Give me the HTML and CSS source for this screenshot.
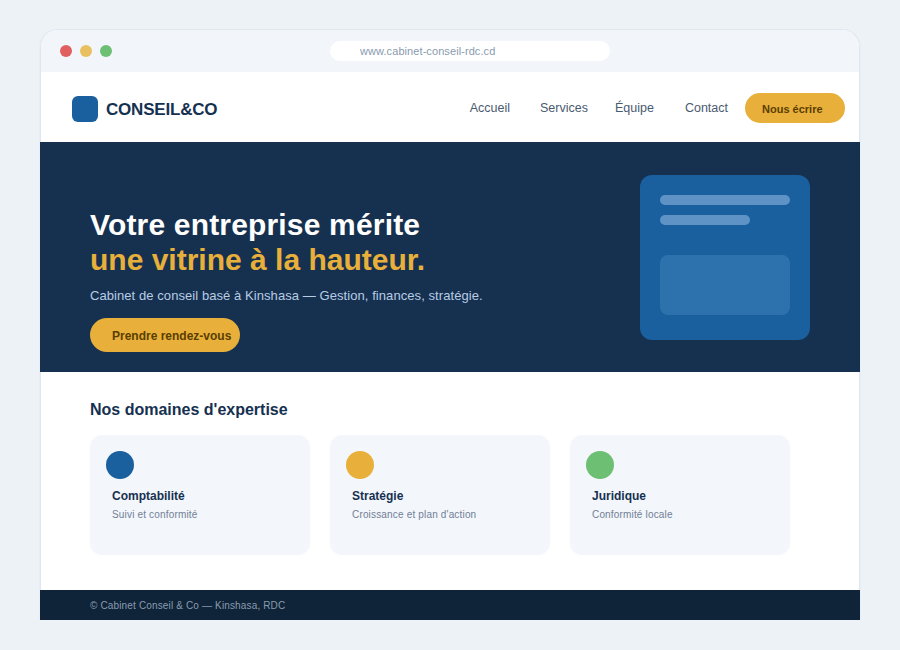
FILE: index.html
```html
<!DOCTYPE html>
<html lang="fr">
<head>
  <meta charset="UTF-8" />
  <title>Conseil&amp;Co</title>
  <link rel="stylesheet" href="styles.css">
</head>
<body>
  <div class="window">
    <!-- Browser chrome -->
    <div class="chrome">
      <div class="dots">
        <span class="dot dot-red"></span>
        <span class="dot dot-yellow"></span>
        <span class="dot dot-green"></span>
      </div>
      <div class="url">www.cabinet-conseil-rdc.cd</div>
    </div>

    <!-- Site nav -->
    <nav class="nav">
      <div class="brand">
        <span class="brand-mark"></span>
        <span class="brand-name">CONSEIL&amp;CO</span>
      </div>
      <div class="nav-links">
        <a class="nav-link link-accueil">Accueil</a>
        <a class="nav-link link-services">Services</a>
        <a class="nav-link link-equipe">Équipe</a>
        <a class="nav-link link-contact">Contact</a>
        <a class="nav-cta">Nous écrire</a>
      </div>
    </nav>

    <!-- Hero -->
    <section class="hero">
      <div class="hero-text">
        <h1><span class="lead">Votre entreprise mérite</span><br><span class="accent">une vitrine à la hauteur.</span></h1>
        <p>Cabinet de conseil basé à Kinshasa — Gestion, finances, stratégie.</p>
        <a class="hero-cta">Prendre rendez-vous</a>
      </div>
      <div class="hero-card">
        <div class="bar bar-long"></div>
        <div class="bar bar-short"></div>
        <div class="hero-block"></div>
      </div>
    </section>

    <!-- Services -->
    <section class="services">
      <h2>Nos domaines d'expertise</h2>
      <div class="cards">
        <div class="card">
          <span class="card-icon icon-blue"></span>
          <div class="card-body">
            <h3>Comptabilité</h3>
            <p>Suivi et conformité</p>
          </div>
        </div>
        <div class="card">
          <span class="card-icon icon-gold"></span>
          <div class="card-body">
            <h3>Stratégie</h3>
            <p>Croissance et plan d'action</p>
          </div>
        </div>
        <div class="card">
          <span class="card-icon icon-green"></span>
          <div class="card-body">
            <h3>Juridique</h3>
            <p>Conformité locale</p>
          </div>
        </div>
      </div>
    </section>

    <footer class="footer">© Cabinet Conseil &amp; Co — Kinshasa, RDC</footer>
  </div>
</body>
</html>
```

FILE: styles.css
```css
/* ===== Page ===== */
* {
  box-sizing: border-box;
}

body {
  margin: 0;
  height: 650px;
  padding: 29px 40px 30px;
  background: #edf2f7;
  font-family: "Liberation Sans", Arial, sans-serif;
  text-rendering: optimizeSpeed;
  overflow: hidden;
}

.window {
  height: 591px;
  border: 1px solid #dfe7f1;
  border-bottom: none;
  border-radius: 18px 18px 0 0;
  background: #ffffff;
  box-shadow: -1px 0 0 #e8eef5, 1px 0 0 #e8eef5;
  display: flex;
  flex-direction: column;
}

/* ===== Browser chrome ===== */
.chrome {
  height: 42px;
  background: #f2f6fb;
  border-radius: 17px 17px 0 0;
  display: flex;
  align-items: center;
  padding: 0 19px;
}

.dots {
  display: flex;
  gap: 8px;
  width: 270px;
}

.dot {
  width: 12px;
  height: 12px;
  border-radius: 50%;
}

.dot-red { background: #e06060; }
.dot-yellow { background: #e8c060; }
.dot-green { background: #6dbf73; }

.url {
  width: 280px;
  height: 20px;
  padding-left: 30px;
  background: #ffffff;
  border-radius: 10px;
  font-size: 11px;
  line-height: 20px;
  letter-spacing: 0.08px;
  color: #8a9bb0;
}

/* ===== Nav ===== */
.nav {
  height: 70px;
  flex: none;
  display: flex;
  align-items: center;
  justify-content: space-between;
  padding: 2px 14px 0 31px;
}

.brand {
  display: flex;
  align-items: center;
  gap: 8px;
  margin-top: 2px;
}

.brand-mark {
  width: 26px;
  height: 26px;
  border-radius: 6px;
  background: #1a5f9e;
}

.brand-name {
  padding-top: 2px;
  font-size: 17px;
  font-weight: 700;
  letter-spacing: -0.2px;
  color: #163150;
}

.nav-links {
  display: flex;
  align-items: center;
}

.nav-link {
  font-size: 12.5px;
  color: #4a5a70;
  margin-top: -1px;
}

.link-accueil { margin-right: 30px; }
.link-services { margin-right: 27px; }
.link-equipe { margin-right: 31px; }
.link-contact { margin-right: 17px; }

.nav-cta {
  width: 100px;
  height: 30px;
  padding-left: 17px;
  border-radius: 15px;
  background: #e8b03a;
  color: #5a3e00;
  font-size: 11px;
  font-weight: 700;
  line-height: 32px;
}

/* ===== Hero ===== */
.hero {
  height: 230px;
  flex: none;
  margin: 0 -1px;
  background: #163150;
  display: flex;
  justify-content: space-between;
  padding: 33px 50px 0;
}

.hero-text {
  padding-top: 32px;
}

.hero h1 {
  margin: 0;
  font-size: 30px;
  line-height: 35px;
  font-weight: 700;
  color: #ffffff;
}

.lead {
  letter-spacing: 0.17px;
}

.accent {
  color: #e8b03a;
}

.hero p {
  margin: 11px 0 0;
  font-size: 13px;
  line-height: 16px;
  letter-spacing: 0.07px;
  color: #b8cce4;
}

.hero-cta {
  display: block;
  width: 150px;
  height: 34px;
  margin-top: 14px;
  padding-left: 22px;
  border-radius: 17px;
  background: #e8b03a;
  color: #5a3e00;
  font-size: 12px;
  font-weight: 700;
  line-height: 36px;
}

.hero-card {
  width: 170px;
  height: 165px;
  padding: 20px;
  border-radius: 12px;
  background: #1a5f9e;
}

.bar {
  height: 10px;
  border-radius: 5px;
  background: #5f93c5;
}

.bar-long { width: 130px; }

.bar-short {
  width: 90px;
  margin-top: 10px;
}

.hero-block {
  height: 60px;
  margin-top: 30px;
  border-radius: 8px;
  background: #2e72ad;
}

/* ===== Services ===== */
.services {
  flex: 1;
  padding: 28px 49px 0;
}

.services h2 {
  margin: 0;
  font-size: 16px;
  line-height: 20px;
  font-weight: 700;
  color: #163150;
}

.cards {
  display: flex;
  gap: 20px;
  margin-top: 15px;
}

.card {
  width: 220px;
  height: 120px;
  padding: 16px;
  border-radius: 12px;
  background: #f3f6fb;
}

.card-icon {
  display: block;
  width: 28px;
  height: 28px;
  border-radius: 50%;
}

.icon-blue { background: #1a5f9e; }
.icon-gold { background: #e8b03a; }
.icon-green { background: #6dbf73; }

.card-body {
  padding: 9px 0 0 6px;
}

.card h3 {
  margin: 0;
  font-size: 12px;
  line-height: 16px;
  font-weight: 700;
  color: #163150;
}

.card p {
  margin: 5px 0 0;
  font-size: 10px;
  line-height: 12px;
  letter-spacing: 0.17px;
  color: #718096;
}

/* ===== Footer ===== */
.footer {
  height: 30px;
  flex: none;
  margin: 0 -1px;
  padding-left: 50px;
  background: #0f2438;
  color: #8a9bb0;
  font-size: 10px;
  line-height: 31px;
  letter-spacing: 0.15px;
}
```
